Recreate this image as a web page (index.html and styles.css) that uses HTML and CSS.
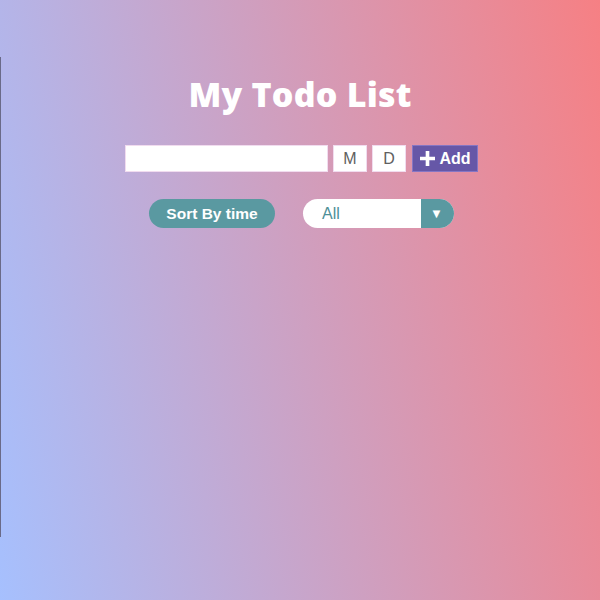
FILE: index.html
```html
<!DOCTYPE html>
<html>
<head>
<meta charset="utf-8">
<link rel="stylesheet" href="styles.css">
</head>
<body>
<div class="edge-line"></div>
<main class="app">
  <h1 class="title">My Todo List</h1>
  <form class="add-row" onsubmit="return false">
    <input class="todo-input" type="text">
    <input class="small-box" type="text" value="M">
    <input class="small-box" type="text" value="D">
    <button class="add-btn" type="button">
      <svg class="plus" viewBox="0 0 14 14" width="15" height="15"><path d="M5.3 0h3.4v5.3H14v3.4H8.7V14H5.3V8.7H0V5.3h5.3z" fill="#fff"/></svg>
      <span>Add</span>
    </button>
  </form>
  <div class="filter-row">
    <button class="sort-btn" type="button">Sort By time</button>
    <div class="select">
      <span class="select-value">All</span>
      <span class="select-arrow">&#9660;</span>
    </div>
  </div>
</main>
</body>
</html>
```
FILE: styles.css
```css
html, body {
  margin: 0;
  padding: 0;
}
body {
  width: 600px;
  height: 600px;
  background: linear-gradient(78deg, #a6c0fe 0%, #f68084 100%);
  font-family: "Liberation Sans", Arial, sans-serif;
  overflow: hidden;
  position: relative;
}
.edge-line {
  position: absolute;
  left: 0;
  top: 57px;
  width: 1px;
  height: 480px;
  background: #6a6a88;
}
.app {
  display: flex;
  flex-direction: column;
  align-items: center;
  padding-top: 72px;
}
.title {
  margin: 0;
  font-family: "Open Sans", sans-serif;
  font-weight: 800;
  font-size: 34px;
  line-height: 44px;
  color: #fff;
  letter-spacing: 0.2px;
}
.add-row {
  display: flex;
  gap: 5px;
  margin-top: 29px;
  padding-left: 3px;
}
.todo-input, .small-box {
  box-sizing: border-box;
  height: 27px;
  border: 1px solid #f1dcef;
  background: #fff;
  margin: 0;
  padding: 0;
  font-family: "Liberation Sans", Arial, sans-serif;
  font-size: 16px;
  color: #606060;
  outline: none;
}
.todo-input {
  width: 203px;
}
.small-box {
  width: 34px;
  text-align: center;
}
.add-btn {
  box-sizing: border-box;
  margin: 0 0 0 1px;
  height: 27px;
  width: 66px;
  display: flex;
  align-items: center;
  justify-content: center;
  gap: 4px;
  background: #6657a7;
  border: 1px solid #8576c4;
  color: #fff;
  font-family: "Liberation Sans", Arial, sans-serif;
  font-weight: 700;
  font-size: 16px;
  padding: 0 0 0 1px;
}
.plus {
  display: block;
}
.filter-row {
  display: flex;
  gap: 28px;
  margin-top: 27px;
  padding-left: 3px;
}
.sort-btn {
  box-sizing: border-box;
  width: 126px;
  height: 29px;
  border: none;
  border-radius: 15px;
  background: #5a99a1;
  color: #fff;
  font-family: "Liberation Sans", Arial, sans-serif;
  font-weight: 700;
  font-size: 15.5px;
  padding: 0;
  margin: 0;
}
.select {
  width: 151px;
  height: 29px;
  display: flex;
  border-radius: 15px;
  overflow: hidden;
  background: #fff;
}
.select-value {
  flex: 1;
  display: flex;
  align-items: center;
  padding-left: 19px;
  font-size: 16px;
  color: #4e8f97;
}
.select-arrow {
  width: 31px;
  background: #5a99a1;
  color: #fff;
  display: flex;
  align-items: center;
  justify-content: center;
  font-size: 13px;
  padding-right: 2px;
}
```
